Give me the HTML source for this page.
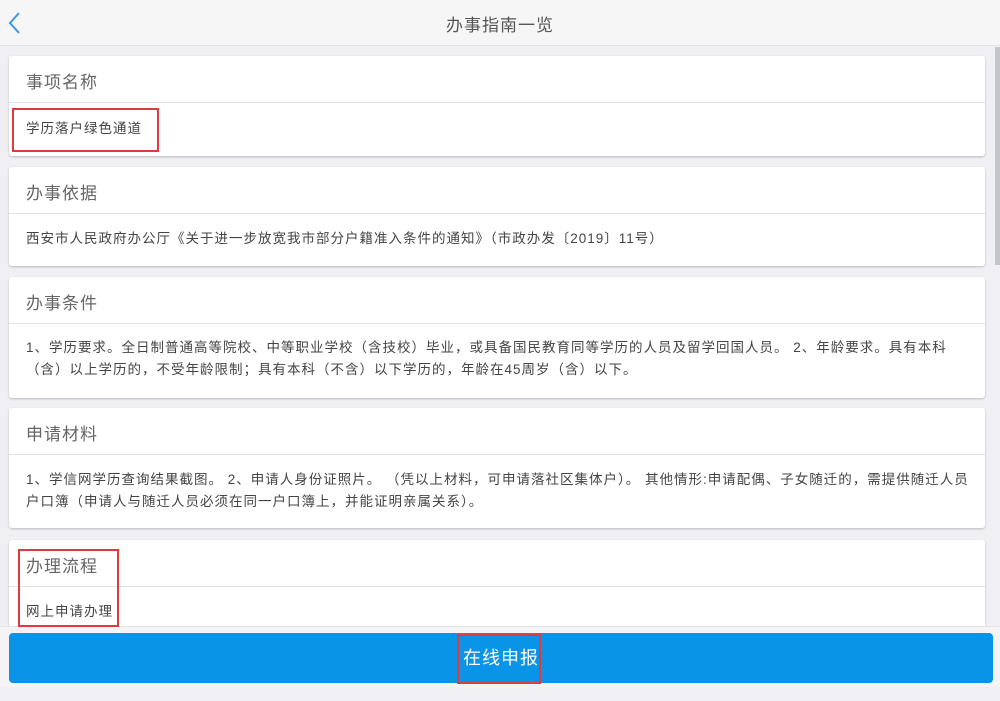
<!DOCTYPE html>
<html><head><meta charset="utf-8"><style>
*{margin:0;padding:0;box-sizing:border-box}
body{width:1000px;height:701px;overflow:hidden;background:#efeff4;font-family:"Liberation Sans","Noto Sans CJK SC",sans-serif;position:relative;color:#333}
.hd{position:absolute;left:0;top:0;width:1000px;height:46px;background:#f6f6f6;border-bottom:1px solid #e2e2e6}
.hd .t{position:absolute;left:0;right:0;top:11px;text-align:center;font-size:17px;color:#555;letter-spacing:1px}
.card{position:absolute;left:9px;width:976px;background:#fff;border-radius:3px;box-shadow:0 1px 2px rgba(0,0,0,.22)}
.card .h{height:47px;border-bottom:1px solid #e2e2e2;padding:12px 0 0 17px;font-size:17px;color:#666;letter-spacing:1px}
.card .c{padding:0 17px;font-size:13.5px;color:#444;letter-spacing:1px;line-height:22px;white-space:nowrap}
.red{position:absolute;border:2px solid #e0393e}
.sb{position:absolute;left:995px;top:47px;width:5px;height:218px;background:#c4c4cc}
.bb{position:absolute;left:0;top:626px;width:1000px;height:61px;background:#f4f4f6;border-top:1px solid #e4e4e8}
.btn{position:absolute;left:9px;top:633px;width:984px;height:50px;background:#0a94e8;border-radius:4px;color:#fff;font-size:18px;text-align:center;line-height:50px;letter-spacing:1px}
</style></head><body>
<div class="hd">
<svg style="position:absolute;left:7px;top:11px" width="14" height="24" viewBox="0 0 14 24"><path d="M12 2 L3 12 L12 22" fill="none" stroke="#3c97e0" stroke-width="2"/></svg>
<div class="t">办事指南一览</div></div>
<div class="sb"></div>
<div class="card" style="top:56px;height:100px"><div class="h">事项名称</div><div class="c" style="padding-top:15px">学历落户绿色通道</div></div>
<div class="card" style="top:167px;height:99px"><div class="h">办事依据</div><div class="c" style="padding-top:14px">西安市人民政府办公厅《关于进一步放宽我市部分户籍准入条件的通知》（市政办发〔2019〕11号）</div></div>
<div class="card" style="top:277px;height:121px"><div class="h">办事条件</div><div class="c" style="padding-top:13px">1、学历要求。全日制普通高等院校、中等职业学校（含技校）毕业，或具备国民教育同等学历的人员及留学回国人员。 2、年龄要求。具有本科<br>（含）以上学历的，不受年龄限制；具有本科（不含）以下学历的，年龄在45周岁（含）以下。</div></div>
<div class="card" style="top:408px;height:120px"><div class="h">申请材料</div><div class="c" style="padding-top:14px">1、学信网学历查询结果截图。 2、申请人身份证照片。 （凭以上材料，可申请落社区集体户）。 其他情形:申请配偶、子女随迁的，需提供随迁人员<br>户口簿（申请人与随迁人员必须在同一户口簿上，并能证明亲属关系）。</div></div>
<div class="card" style="top:540px;height:100px"><div class="h">办理流程</div><div class="c" style="padding-top:14px">网上申请办理</div></div>
<div class="bb"></div>
<div class="btn">在线申报</div>
<div class="red" style="left:12px;top:108px;width:147px;height:44px"></div>
<div class="red" style="left:18px;top:549px;width:101px;height:78px"></div>
<div class="red" style="left:457px;top:634px;width:84px;height:50px"></div>
</body></html>
